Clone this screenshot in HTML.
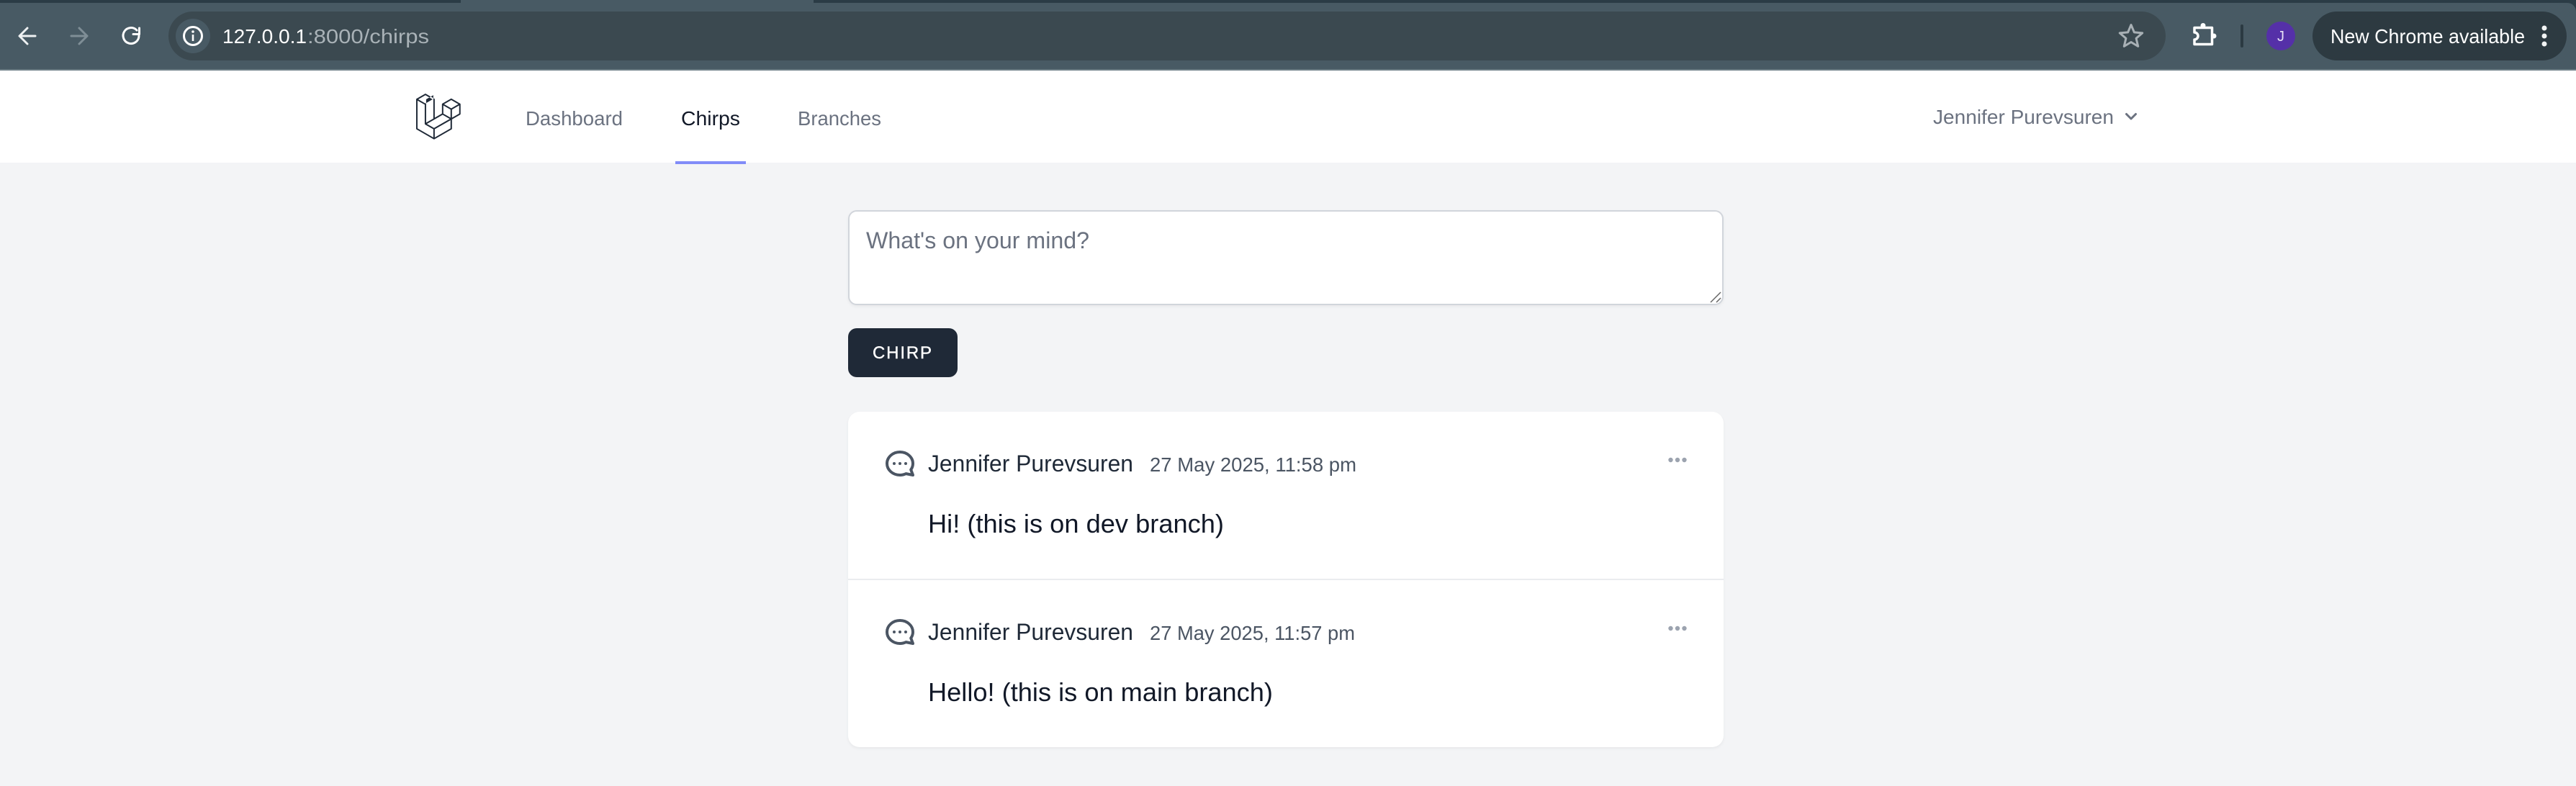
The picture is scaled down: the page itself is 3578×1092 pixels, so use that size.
<!DOCTYPE html>
<html lang="en">
<head>
<meta charset="utf-8">
<title>Chirps</title>
<style>
html,body{margin:0;padding:0;width:3578px;height:1092px;overflow:hidden;background:#f3f4f6;}
body{position:relative;font-family:"Liberation Sans",sans-serif;}
.b{position:absolute;box-sizing:border-box;}
svg.o{position:absolute;left:0;top:0;width:3578px;height:1092px;}
svg text{font-family:"Liberation Sans",sans-serif;}
</style>
</head>
<body>
<div class="b" style="left:0;top:0;width:3578px;height:98px;background:#2b3c46;"></div>
<div class="b" style="left:0;top:4px;width:3578px;height:94px;background:#485a64;border-radius:0 12px 0 0;"></div>
<div class="b" style="left:0;top:96px;width:3578px;height:2px;background:#6a7b83;"></div>
<div class="b" style="left:640px;top:0;width:490px;height:6px;background:#485a64;"></div>
<div class="b" style="left:234px;top:16px;width:2774px;height:68px;background:#3b4950;border-radius:34px;"></div>
<div class="b" style="left:244px;top:26px;width:48px;height:48px;background:#485a64;border-radius:50%;"></div>
<div class="b" style="left:3212px;top:16px;width:353px;height:68px;background:#2d3a41;border-radius:34px;"></div>
<div class="b" style="left:3112px;top:34px;width:4px;height:32px;background:#2b3a42;border-radius:2px;"></div>
<div class="b" style="left:3148px;top:30px;width:40px;height:40px;background:#5530a8;border-radius:50%;"></div>

<div class="b" style="left:0;top:98px;width:3578px;height:128px;background:#fff;"></div>
<div class="b" style="left:938px;top:224px;width:98px;height:4px;background:#818cf8;"></div>

<div class="b" style="left:1178px;top:292px;width:1216px;height:132px;background:#fff;border:2px solid #d1d5db;border-radius:12px;box-shadow:0 2px 4px rgba(0,0,0,.05);"></div>
<div class="b" style="left:1178px;top:456px;width:152px;height:68px;background:#1f2937;border-radius:12px;"></div>

<div class="b" style="left:1178px;top:572px;width:1216px;height:466px;background:#fff;border-radius:16px;box-shadow:0 2px 4px rgba(0,0,0,.05);"></div>
<div class="b" style="left:1178px;top:804px;width:1216px;height:2px;background:#eaecef;"></div>

<svg class="o" viewBox="0 0 3578 1092" xmlns="http://www.w3.org/2000/svg">
  <!-- browser icons -->
  <g fill="none" stroke-linecap="round" stroke-linejoin="round" stroke-width="3">
    <path d="M49 50H29M38 39L27 50L38 61" stroke="#eef1f2"/>
    <path d="M99 50H119M110 39L121 50L110 61" stroke="#7f8e96"/>
    <path d="M193 50a11 11 0 1 1-3-8" stroke="#fff"/>
    <path d="M193.500 39v8.500h-8.500" stroke="#fff"/>
    <circle cx="268" cy="50" r="12.500" stroke="#fff"/>
    <path d="M2960 34.500L2964.400 44.900L2975.700 45.900L2967.100 53.300L2969.700 64.350L2960 58.500L2950.300 64.350L2952.900 53.300L2944.300 45.900L2955.600 44.900Z" stroke="#a8b0b5"/>
    <path d="M3048 38.500H3072.500V61.500H3048V55a5 5 0 0 0 0-10Z" stroke="#fff" stroke-width="3.500"/>
  </g>
  <circle cx="3060" cy="35.500" r="3.500" fill="#fff"/>
  <circle cx="3075" cy="50" r="3.500" fill="#fff"/>
  <circle cx="268" cy="44" r="1.800" fill="#fff"/>
  <rect x="266.700" y="48" width="2.600" height="9" fill="#fff"/>
  <g fill="#f2f4f5">
    <circle cx="3534" cy="39" r="3.500"/><circle cx="3534" cy="50" r="3.500"/><circle cx="3534" cy="61" r="3.500"/>
  </g>

  <!-- browser text -->
  <text x="309" y="60" font-size="28" fill="#fff" textLength="117" lengthAdjust="spacingAndGlyphs">127.0.0.1</text>
  <text x="427" y="60" font-size="28" fill="#a9b2b7" textLength="169" lengthAdjust="spacingAndGlyphs">:8000/chirps</text>
  <text x="3168" y="57" font-size="20" fill="#e6dff5" text-anchor="middle">J</text>
  <text x="3237" y="60" font-size="28" fill="#fff" textLength="270" lengthAdjust="spacingAndGlyphs">New Chrome available</text>

  <!-- logo -->
  <g transform="translate(570 126) scale(.22785)" fill="#1f2937">
    <path fill-rule="evenodd" d="M305.800 81.125C305.770 80.995 305.690 80.885 305.650 80.755C305.560 80.525 305.490 80.285 305.370 80.075C305.290 79.935 305.170 79.815 305.070 79.685C304.940 79.515 304.830 79.325 304.680 79.175C304.550 79.045 304.390 78.955 304.250 78.845C304.090 78.715 303.950 78.575 303.770 78.475L251.320 48.275C249.970 47.495 248.310 47.495 246.960 48.275L194.510 78.475C194.330 78.575 194.190 78.725 194.030 78.845C193.890 78.955 193.730 79.045 193.600 79.175C193.450 79.325 193.340 79.515 193.210 79.685C193.110 79.815 192.990 79.935 192.910 80.075C192.790 80.285 192.710 80.525 192.630 80.755C192.580 80.875 192.510 80.995 192.480 81.125C192.380 81.495 192.330 81.875 192.330 82.265V139.485L148.620 164.645V52.525C148.620 52.135 148.570 51.755 148.470 51.385C148.440 51.255 148.360 51.145 148.320 51.015C148.230 50.785 148.160 50.545 148.040 50.335C147.960 50.195 147.840 50.075 147.740 49.945C147.610 49.775 147.500 49.585 147.350 49.435C147.220 49.305 147.060 49.215 146.920 49.105C146.760 48.975 146.620 48.835 146.440 48.735L93.990 18.535C92.640 17.755 90.980 17.755 89.630 18.535L37.180 48.735C37 48.835 36.860 48.985 36.700 49.105C36.560 49.215 36.400 49.305 36.270 49.435C36.120 49.585 36.010 49.775 35.880 49.945C35.780 50.075 35.660 50.195 35.580 50.335C35.460 50.545 35.380 50.785 35.300 51.015C35.250 51.135 35.180 51.255 35.150 51.385C35.050 51.755 35 52.135 35 52.525V232.235C35 233.795 35.840 235.245 37.190 236.025L142.100 296.425C142.330 296.555 142.580 296.635 142.830 296.725C142.950 296.765 143.060 296.835 143.180 296.865C143.550 296.965 143.930 297.015 144.310 297.015C144.690 297.015 145.070 296.965 145.440 296.865C145.550 296.835 145.650 296.775 145.760 296.735C146.020 296.645 146.280 296.565 146.520 296.425L251.430 236.025C252.780 235.245 253.620 233.805 253.620 232.235V174.885L303.810 145.985C305.170 145.205 306 143.755 306 142.195V82.265C305.950 81.875 305.890 81.495 305.800 81.125ZM144.200 227.205L100.570 202.515L146.390 176.135L196.660 147.195L240.330 172.335L208.290 190.625L144.200 227.205ZM244.750 114.995V164.795L226.390 154.225L201.010 139.625V89.825L219.370 100.395L244.750 114.995ZM249.120 57.105L292.810 82.265L249.120 107.425L205.430 82.265L249.120 57.105ZM114.490 184.425L96.130 194.995V52.525L121.510 37.925L139.870 27.355V169.825L114.490 184.425ZM91.760 27.355L135.450 52.515L91.760 77.675L48.070 52.515L91.760 27.355ZM43.670 60.105L62.030 70.675L87.410 85.275V202.545V202.555V202.565C87.410 202.735 87.460 202.895 87.480 203.065C87.510 203.275 87.510 203.495 87.570 203.695V203.705C87.620 203.875 87.710 204.035 87.780 204.195C87.850 204.375 87.910 204.575 88.010 204.745C88.010 204.745 88.010 204.755 88.020 204.755C88.110 204.905 88.240 205.035 88.350 205.175C88.470 205.325 88.570 205.495 88.700 205.625L88.710 205.635C88.820 205.745 88.960 205.825 89.090 205.925C89.230 206.035 89.360 206.155 89.510 206.245C89.520 206.245 89.520 206.245 89.530 206.255C89.540 206.255 89.540 206.265 89.550 206.265L139.870 234.735V285.025L43.670 229.675V60.105ZM244.750 229.675L148.580 285.035V234.725L219.800 194.075L244.750 179.805V229.675ZM297.200 139.675L253.630 164.795V114.995L279.010 100.395L297.370 89.825V139.625L297.200 139.675Z"/>
  </g>

  <!-- nav -->
  <text x="730" y="174" font-size="28" fill="#6b7280" textLength="135" lengthAdjust="spacingAndGlyphs">Dashboard</text>
  <text x="946" y="174" font-size="28" fill="#111827" textLength="82" lengthAdjust="spacingAndGlyphs">Chirps</text>
  <text x="1108" y="174" font-size="28" fill="#6b7280" textLength="116" lengthAdjust="spacingAndGlyphs">Branches</text>
  <text x="2685" y="172" font-size="28" fill="#6b7280" textLength="251" lengthAdjust="spacingAndGlyphs">Jennifer Purevsuren</text>
  <path d="M2953.500 158.500L2960 165L2966.500 158.500" fill="none" stroke="#6b7280" stroke-width="3" stroke-linecap="round" stroke-linejoin="round"/>

  <!-- form -->
  <text x="1203" y="345" font-size="32" fill="#6b7280" textLength="310" lengthAdjust="spacingAndGlyphs">What's on your mind?</text>
  <path d="M2390 406L2376 420M2390 414L2384 420" stroke="#666" stroke-width="1.500" fill="none"/>
  <text x="1212" y="498" font-size="24" fill="#fff" stroke="#fff" stroke-width=".4" textLength="82" lengthAdjust="spacing">CHIRP</text>

  <!-- chirp 1 -->
  <g transform="translate(1250 0) scale(-1 1) translate(-1250 0)">
    <g transform="translate(1226 620) scale(2)" fill="none" stroke="#4b5563" stroke-width="2" stroke-linecap="round" stroke-linejoin="round">
      <path d="M8 12h.01M12 12h.01M16 12h.01M21 12c0 4.418-4.030 8-9 8a9.863 9.863 0 01-4.255-.949L3 20l1.395-3.720C3.512 15.042 3 13.574 3 12c0-4.418 4.030-8 9-8s9 3.582 9 8z"/>
    </g>
  </g>
  <text x="1289" y="655" font-size="32" fill="#1f2937" textLength="285" lengthAdjust="spacingAndGlyphs">Jennifer Purevsuren</text>
  <text x="1597" y="655" font-size="28" fill="#4b5563" textLength="287" lengthAdjust="spacingAndGlyphs">27 May 2025, 11:58 pm</text>
  <text x="1289" y="740" font-size="36" fill="#111827" textLength="411" lengthAdjust="spacingAndGlyphs">Hi! (this is on dev branch)</text>
  <g fill="#9ca3af"><circle cx="2320.500" cy="639" r="3.200"/><circle cx="2330" cy="639" r="3.200"/><circle cx="2339.500" cy="639" r="3.200"/></g>

  <!-- chirp 2 -->
  <g transform="translate(1250 0) scale(-1 1) translate(-1250 0)">
    <g transform="translate(1226 854) scale(2)" fill="none" stroke="#4b5563" stroke-width="2" stroke-linecap="round" stroke-linejoin="round">
      <path d="M8 12h.01M12 12h.01M16 12h.01M21 12c0 4.418-4.030 8-9 8a9.863 9.863 0 01-4.255-.949L3 20l1.395-3.720C3.512 15.042 3 13.574 3 12c0-4.418 4.030-8 9-8s9 3.582 9 8z"/>
    </g>
  </g>
  <text x="1289" y="889" font-size="32" fill="#1f2937" textLength="285" lengthAdjust="spacingAndGlyphs">Jennifer Purevsuren</text>
  <text x="1597" y="889" font-size="28" fill="#4b5563" textLength="285" lengthAdjust="spacingAndGlyphs">27 May 2025, 11:57 pm</text>
  <text x="1289" y="974" font-size="36" fill="#111827" textLength="479" lengthAdjust="spacingAndGlyphs">Hello! (this is on main branch)</text>
  <g fill="#9ca3af"><circle cx="2320.500" cy="873" r="3.200"/><circle cx="2330" cy="873" r="3.200"/><circle cx="2339.500" cy="873" r="3.200"/></g>
</svg>
</body>
</html>
